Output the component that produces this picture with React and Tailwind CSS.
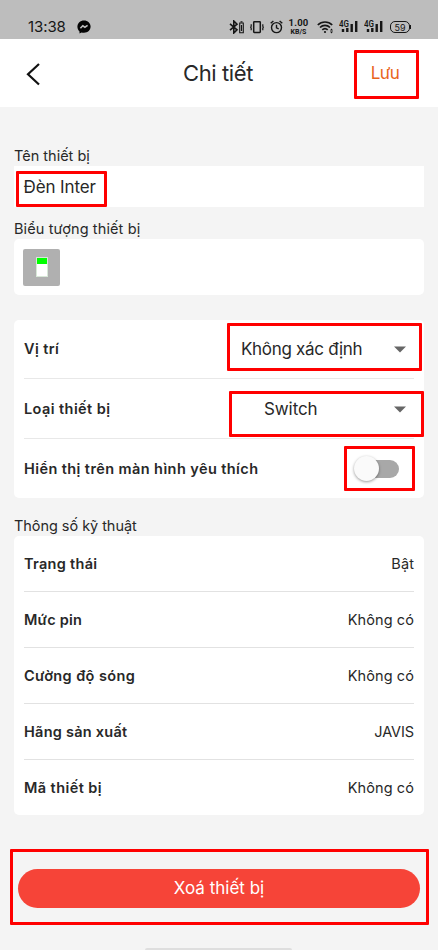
import React from 'react';

const specs = [
  { label: 'Trạng thái', value: 'Bật', ls: 'tracking-[0.3px]', vs: 'tracking-[0.1px]' },
  { label: 'Mức pin', value: 'Không có', ls: 'tracking-[0.2px]', vs: 'tracking-[0.1px]' },
  { label: 'Cường độ sóng', value: 'Không có', ls: 'tracking-[0.4px]', vs: 'tracking-[0.1px]' },
  { label: 'Hãng sản xuất', value: 'JAVIS', ls: 'tracking-[0.25px]', vs: 'tracking-[-0.1px]' },
  { label: 'Mã thiết bị', value: 'Không có', ls: 'tracking-[0.42px]', vs: 'tracking-[0.1px]' },
];

function Highlight({ className }) {
  return <div className={`pointer-events-none absolute rounded-[1px] border-[3px] border-[#ff0000] ${className}`} />;
}

function Signal() {
  return (
    <svg className="h-[15px] w-[19px]" viewBox="0 0 19 15">
      <text x="0" y="8.500" fontSize="8.5" fontWeight="600" fontFamily="Roboto, sans-serif" fill="#161616" textLength="10" lengthAdjust="spacingAndGlyphs">4G</text>
      <path d="M4 11v3M8.300 10v4M12.700 6v8M17.200 3v11" stroke="#161616" strokeWidth="2.400" />
    </svg>
  );
}

function StatusBar() {
  return (
    <div className="flex h-[39px] w-full shrink-0 bg-[#bdbdbd] pl-[28px] pt-[18px] text-[#161616]">
      <span className="w-[49px] text-[15px] leading-[18px] tracking-[-0.1px]">13:38</span>
      <svg className="mt-[2px] h-[14px] w-[14px]" viewBox="0 0 14 14">
        <path d="M7 .5C3.2.5.4 3.2.4 6.8c0 1.9.8 3.5 2.1 4.6v2.1l2-1.1c.8.2 1.6.4 2.5.4 3.8 0 6.6-2.7 6.6-6.2S10.800.5 7 .5Z" fill="#050505" />
        <path d="m3.400 8.300 2.400-2.500 2.100 1.400 2.700-1.800" fill="none" stroke="#bdbdbd" strokeWidth="1.600" />
      </svg>
      <svg className="ml-[138px] mt-[2px] h-[14px] w-[16px]" viewBox="0 0 16 14" fill="none" stroke="#161616">
        <path d="m1 3.800 7 6L4.800 13V1L8 4.200l-7 6" strokeWidth="1.600" />
        <path d="M10.700 3h3.600v9.800h-3.600ZM11.500 1.800h2" strokeWidth="1.100" />
        <path d="M12.500 5v6" strokeWidth="1.200" />
      </svg>
      <svg className="ml-[5px] mt-[2px] h-[14px] w-[14px]" viewBox="0 0 14 14" fill="none" stroke="#161616">
        <rect x="3.700" y="1.800" width="6.600" height="10.600" rx=".6" strokeWidth="1.500" />
        <path d="M1.200 4.200v2l-.5 1 .5 1v2M12.800 4.200v2l.5 1-.5 1v2" strokeWidth="1.200" />
      </svg>
      <svg className="ml-[6px] mt-[2px] h-[14px] w-[13px]" viewBox="0 0 13 14" fill="none" stroke="#161616" strokeWidth="1.400">
        <circle cx="6.500" cy="7.600" r="5" />
        <path d="M6.500 4.800v3l2.200 1M.7 3.300 3.400 1M9.600 1l2.700 2.300" />
      </svg>
      <div className="ml-[5px] flex w-[21px] flex-col items-center font-[Roboto,sans-serif] font-bold">
        <span className="text-[9.500px] leading-[10px] tracking-[0.2px]">1.00</span>
        <span className="text-[7px] leading-[9px]">KB/S</span>
      </div>
      <svg className="ml-[8px] mt-[2px] h-[14px] w-[17px]" viewBox="0 0 17 14" fill="none" stroke="#161616" strokeWidth="1.700">
        <path d="M.8 5c4-4 10.400-4 14.400 0M3 7.500c2.900-2.900 7.100-2.900 10 0M5.300 9.800c1.600-1.500 3.800-1.500 5.400 0" />
        <circle cx="8" cy="12" r="1.100" fill="#161616" stroke="none" />
        <path d="m13 10.500 1.500-2 1.500 2ZM13 11.500l1.500 2 1.500-2Z" fill="#161616" stroke="none" />
      </svg>
      <div className="ml-[5px]"><Signal /></div>
      <div className="ml-[6px]"><Signal /></div>
      <div className="ml-[7px] mt-[3px] flex h-[12px] w-[20px] items-center justify-center rounded-[5px] border-[1.500px] border-[#161616] text-[9px] leading-none">59</div>
      <div className="mt-[7px] h-[4px] w-[1px] bg-[#161616]" />
    </div>
  );
}

function Caret() {
  return (
    <svg className="h-[7px] w-[12px]" viewBox="0 0 12 7"><path d="M0 .5h12l-6 6Z" fill="#666" /></svg>
  );
}

export default function App() {
  return (
    <div className="relative flex h-[950px] w-[438px] flex-col overflow-hidden bg-[#f4f4f4] font-[Inter,'Noto_Sans',sans-serif] text-[#282828]">
      <StatusBar />
      <header className="flex h-[68px] shrink-0 items-center bg-white">
        <svg className="ml-[26px] mt-[2px] h-[24px] w-[14px]" viewBox="0 0 14 24" fill="none" stroke="#111" strokeWidth="2.200">
          <path d="M13 2 2 12.200 13 22.500" />
        </svg>
        <h1 className="flex-1 pl-[26px] text-center text-[22px] tracking-[-0.4px]">Chi tiết</h1>
        <button className="mr-[38px] w-[30px] whitespace-nowrap pt-[2px] text-[17px] tracking-[-0.6px] text-[#e8641b]">Lưu</button>
      </header>

      <main className="flex flex-col px-[14px]">
        <label className="mt-[38px] h-[21px] whitespace-nowrap text-[14.500px] leading-[21px] tracking-[0px]">Tên thiết bị</label>
        <div className="h-[41px] bg-white pl-[9.500px] text-[17px] leading-[43px] tracking-[-0.1px]">Đèn Inter</div>

        <div className="mt-[12px] h-[20px] whitespace-nowrap text-[14.500px] leading-[20px] tracking-[0.12px]">Biểu tượng thiết bị</div>
        <div className="flex h-[56px] items-center rounded-[5px] bg-white pl-[9px]">
          <div className="flex h-[37px] w-[37px] items-center justify-center rounded-[2px] bg-[#b0b0b0]">
            <div className="h-[20px] w-[12px] border border-[#d8e8d8] bg-white"><div className="h-[6px] bg-[#00ff00]" /></div>
          </div>
        </div>

        <section className="mt-[25px] flex h-[178px] flex-col rounded-[5px] bg-white px-[10px] text-[14.500px]">
          <div className="flex h-[59px] items-center border-b border-[#e8e8e8]">
            <span className="w-[217px] font-semibold tracking-[0.4px]">Vị trí</span>
            <span className="flex-1 pt-[2px] text-[17px] tracking-[-0.3px]">Không xác định</span>
            <span className="mr-[8px]"><Caret /></span>
          </div>
          <div className="flex h-[60px] items-center border-b border-[#e8e8e8]">
            <span className="w-[240px] font-semibold tracking-[0.42px]">Loại thiết bị</span>
            <span className="flex-1 pt-[2px] text-[17px] tracking-[-0.1px]">Switch</span>
            <span className="mr-[8px] pt-[2px]"><Caret /></span>
          </div>
          <div className="flex h-[59px] items-center justify-between">
            <span className="whitespace-nowrap font-semibold tracking-[0.41px]">Hiển thị trên màn hình yêu thích</span>
            <div className="mr-[15px] flex h-[18px] w-[42px] items-center rounded-full bg-[#a8a8a8]">
              <div className="-ml-[3px] h-[25px] w-[25px] shrink-0 rounded-full bg-[#fafafa] shadow-[0_1px_3px_rgba(0,0,0,0.4)]" />
            </div>
          </div>
        </section>

        <div className="mt-[17px] h-[21px] whitespace-nowrap text-[14.500px] leading-[21px] tracking-[-0.05px]">Thông số kỹ thuật</div>
        <section className="flex h-[279px] flex-col rounded-[5px] bg-white px-[10px] text-[14.500px]">
          {specs.map((s) => (
            <div key={s.label} className="flex h-[56px] shrink-0 items-center justify-between border-b border-[#e2e2e2] last:h-[55px] last:border-b-0">
              <span className={`font-semibold ${s.ls}`}>{s.label}</span>
              <span className={s.vs}>{s.value}</span>
            </div>
          ))}
        </section>

        <button className="ml-[4px] mt-[54px] h-[39px] w-[402px] rounded-full bg-[#f64438] pt-[1px] text-[17px] text-white">Xoá thiết bị</button>
      </main>

      <div className="absolute bottom-0 left-[145px] h-[2px] w-[147px] rounded-t bg-[#dedede]" />

      <Highlight className="left-[354px] top-[50px] h-[49px] w-[65px]" />
      <Highlight className="left-[16px] top-[171px] h-[36px] w-[91px]" />
      <Highlight className="left-[227px] top-[323px] h-[48px] w-[195px]" />
      <Highlight className="left-[229px] top-[391px] h-[46px] w-[195px]" />
      <Highlight className="left-[344px] top-[446px] h-[45px] w-[71px]" />
      <Highlight className="left-[10px] top-[849px] h-[76px] w-[419px]" />
    </div>
  );
}
